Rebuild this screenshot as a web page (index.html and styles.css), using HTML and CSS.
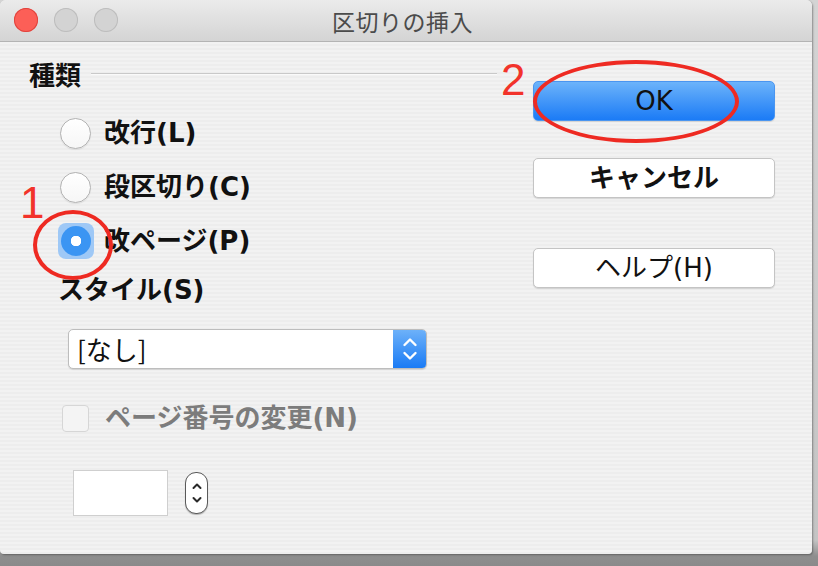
FILE: index.html
```html
<!DOCTYPE html>
<html lang="ja">
<head>
<meta charset="utf-8">
<title>区切りの挿入</title>
<link rel="stylesheet" href="styles.css">
</head>
<body>
<div class="window">
  <div class="titlebar">
    <div class="lights">
      <span class="light close"></span>
      <span class="light"></span>
      <span class="light"></span>
    </div>
    <div class="title">区切りの挿入</div>
  </div>
  <div class="content">
    <div class="left">
      <div class="group-head"><span class="group-name">種類</span><span class="rule"></span></div>
      <div class="radios">
        <div class="radio-row"><span class="radio"></span><span class="label">改行(L)</span></div>
        <div class="radio-row"><span class="radio"></span><span class="label">段区切り(C)</span></div>
        <div class="radio-row"><span class="radio-focus"><span class="radio on"></span></span><span class="label">改ページ(P)</span></div>
      </div>
      <div class="style-label">スタイル(S)</div>
      <div class="select">
        <span class="select-text">[なし]</span>
        <span class="select-btn">
          <svg width="16" height="26" viewBox="0 0 16 26"><path d="M2.5 9 L8 3.5 L13.5 9" fill="none" stroke="#fff" stroke-width="2.4" stroke-linecap="round" stroke-linejoin="round"/><path d="M2.5 17 L8 22.5 L13.5 17" fill="none" stroke="#fff" stroke-width="2.4" stroke-linecap="round" stroke-linejoin="round"/></svg>
        </span>
      </div>
      <div class="check-row"><span class="checkbox"></span><span class="label disabled">ページ番号の変更(N)</span></div>
      <div class="num-row">
        <span class="num-input"></span>
        <span class="stepper">
          <svg width="12" height="30" viewBox="0 0 12 30"><path d="M2.5 10 L6 6.5 L9.5 10" fill="none" stroke="#2a2a2a" stroke-width="2" stroke-linecap="round" stroke-linejoin="round"/><path d="M2.5 20 L6 23.5 L9.5 20" fill="none" stroke="#2a2a2a" stroke-width="2" stroke-linecap="round" stroke-linejoin="round"/></svg>
        </span>
      </div>
    </div>
    <div class="right">
      <button class="btn primary">OK</button>
      <button class="btn bold">キャンセル</button>
      <button class="btn help">ヘルプ(H)</button>
    </div>
  </div>
  <span class="mark mark-1">1</span>
  <span class="ring ring-1"></span>
  <span class="mark mark-2">2</span>
  <span class="ring ring-2"></span>
</div>
</body>
</html>
```
FILE: styles.css
```css
html, body {
  margin: 0;
  padding: 0;
}
body {
  width: 818px;
  height: 566px;
  overflow: hidden;
  background: linear-gradient(to bottom, #d4d4d4 0, #c4c4c4 540px, #8e8e8e 556px, #8a8a8a 566px);
  font-family: "DejaVu Sans", "Noto Sans CJK JP", sans-serif;
}
.window {
  position: relative;
  width: 812px;
  height: 554px;
  border-radius: 6px 6px 4px 4px;
  overflow: hidden;
  background: repeating-linear-gradient(to bottom, #ededed 0, #ededed 2px, #f2f2f2 2px, #f2f2f2 4px);
  box-shadow: 1px 1px 2px rgba(0,0,0,0.35);
}
.titlebar {
  position: relative;
  height: 41px;
  border-bottom: 1px solid #b4b4b4;
  background: linear-gradient(to bottom, #ebebeb, #d4d4d4);
  display: flex;
  align-items: center;
  justify-content: center;
}
.lights {
  position: absolute;
  left: 14px;
  top: 8px;
  display: flex;
  gap: 16px;
}
.light {
  width: 24px;
  height: 24px;
  border-radius: 50%;
  background: #d3d3d3;
  box-shadow: inset 0 0 0 1px #bdbdbd;
}
.light.close {
  background: #fc5f57;
  box-shadow: inset 0 0 0 1px #e0443e;
}
.title {
  font-family: "Noto Sans CJK JP", sans-serif;
  font-size: 23px;
  color: #4b4b4b;
  letter-spacing: 0.5px;
  margin-left: -7px;
}
.content {
  display: flex;
}
.left {
  width: 497px;
  padding-left: 29px;
  padding-top: 17px;
  box-sizing: border-box;
}
.group-head {
  display: flex;
  align-items: center;
  height: 30px;
}
.group-name {
  font-family: "Noto Sans CJK JP", sans-serif;
  font-weight: 700;
  font-size: 26px;
  line-height: 30px;
  color: #111;
}
.rule {
  flex: 1;
  height: 1px;
  margin-left: 10px;
  margin-top: -1px;
  background: #c9c9c9;
  box-shadow: 0 1px 0 #fafafa;
}
.radios {
  margin-top: 24px;
  margin-left: 31px;
  display: flex;
  flex-direction: column;
  gap: 14px;
}
.radio-row {
  height: 40px;
  display: flex;
  align-items: center;
}
.radio {
  width: 31px;
  height: 31px;
  box-sizing: border-box;
  border-radius: 50%;
  border: 1px solid #b2b2b2;
  background: linear-gradient(to bottom, #ffffff, #f6f6f6);
  box-shadow: 0 1px 1px rgba(0,0,0,0.08);
  flex: none;
}
.radio-row > .radio { margin-right: 13px; }
.radio-focus {
  width: 36px;
  height: 36px;
  margin-left: -2.5px;
  margin-right: 10.5px;
  border-radius: 8px;
  background: #9ec8f6;
  display: flex;
  align-items: center;
  justify-content: center;
  flex: none;
}
.radio.on {
  width: 30px;
  height: 30px;
  border: none;
  background: radial-gradient(circle, #ffffff 0, #ffffff 5px, #3b95f3 5.5px);
  box-shadow: none;
}
.label {
  font-size: 26px;
  font-weight: 700;
  color: #111;
  line-height: 30px;
  white-space: nowrap;
}
.label.disabled {
  color: #7c7c7c;
}
.style-label {
  margin-top: 14px;
  margin-left: 29px;
  font-size: 26px;
  font-weight: 700;
  color: #111;
  line-height: 30px;
}
.select {
  margin-top: 24px;
  margin-left: 39px;
  width: 359px;
  height: 40px;
  box-sizing: border-box;
  border: 1px solid #bdbdbd;
  border-radius: 5px;
  background: #fff;
  box-shadow: 0 1px 1px rgba(0,0,0,0.12);
  display: flex;
  overflow: hidden;
}
.select-text {
  flex: 1;
  padding-left: 8px;
  font-family: "Noto Sans CJK JP", sans-serif;
  font-size: 26px;
  line-height: 37px;
  color: #111;
}
.select-btn {
  width: 33px;
  background: linear-gradient(to bottom, #6db1f9, #1a7bf5);
  display: flex;
  align-items: center;
  justify-content: center;
}
.check-row {
  margin-top: 34px;
  margin-left: 33px;
  height: 30px;
  display: flex;
  align-items: center;
  gap: 16px;
}
.checkbox {
  width: 27px;
  height: 27px;
  box-sizing: border-box;
  border: 1px solid #d6d6d6;
  border-radius: 4px;
  background: #f4f4f4;
}
.num-row {
  margin-top: 37px;
  margin-left: 44px;
  display: flex;
  align-items: center;
  gap: 17px;
}
.num-input {
  width: 95px;
  height: 46px;
  box-sizing: border-box;
  border: 1px solid #cfcfcf;
  background: #fff;
}
.stepper {
  width: 23px;
  height: 42px;
  box-sizing: border-box;
  border: 1px solid #5a5a5a;
  border-radius: 11px;
  background: #fff;
  box-shadow: 0 1px 1px rgba(0,0,0,0.25);
  display: flex;
  align-items: center;
  justify-content: center;
}
.right {
  margin-left: 36px;
  width: 242px;
  padding-top: 39px;
  display: flex;
  flex-direction: column;
}
.btn {
  height: 40px;
  box-sizing: border-box;
  border: 1px solid #c4c4c4;
  border-radius: 5px;
  background: #fff;
  box-shadow: 0 1px 1px rgba(0,0,0,0.12);
  font-family: "DejaVu Sans", "Noto Sans CJK JP", sans-serif;
  font-size: 26px;
  color: #111;
  padding: 0;
  line-height: 36px;
}
.btn.primary {
  border: 1px solid #4a95f0;
  background: linear-gradient(to bottom, #6cb3fa, #1b7bf6);
}
.btn.bold {
  margin-top: 37px;
  font-weight: 700;
}
.btn.help {
  margin-top: 50px;
}
.mark {
  position: absolute;
  font-family: "Liberation Sans", sans-serif;
  font-weight: 400;
  font-size: 44px;
  line-height: 44px;
  color: #f2332b;
}
.mark-1 { left: 20px; top: 181px; }
.mark-2 { left: 501px; top: 58px; }
.ring {
  position: absolute;
  border: 4px solid #ee2a22;
  border-radius: 50%;
  box-sizing: border-box;
}
.ring-1 { left: 33px; top: 210px; width: 80px; height: 70px; }
.ring-2 { left: 533px; top: 60px; width: 206px; height: 83px; }
```
